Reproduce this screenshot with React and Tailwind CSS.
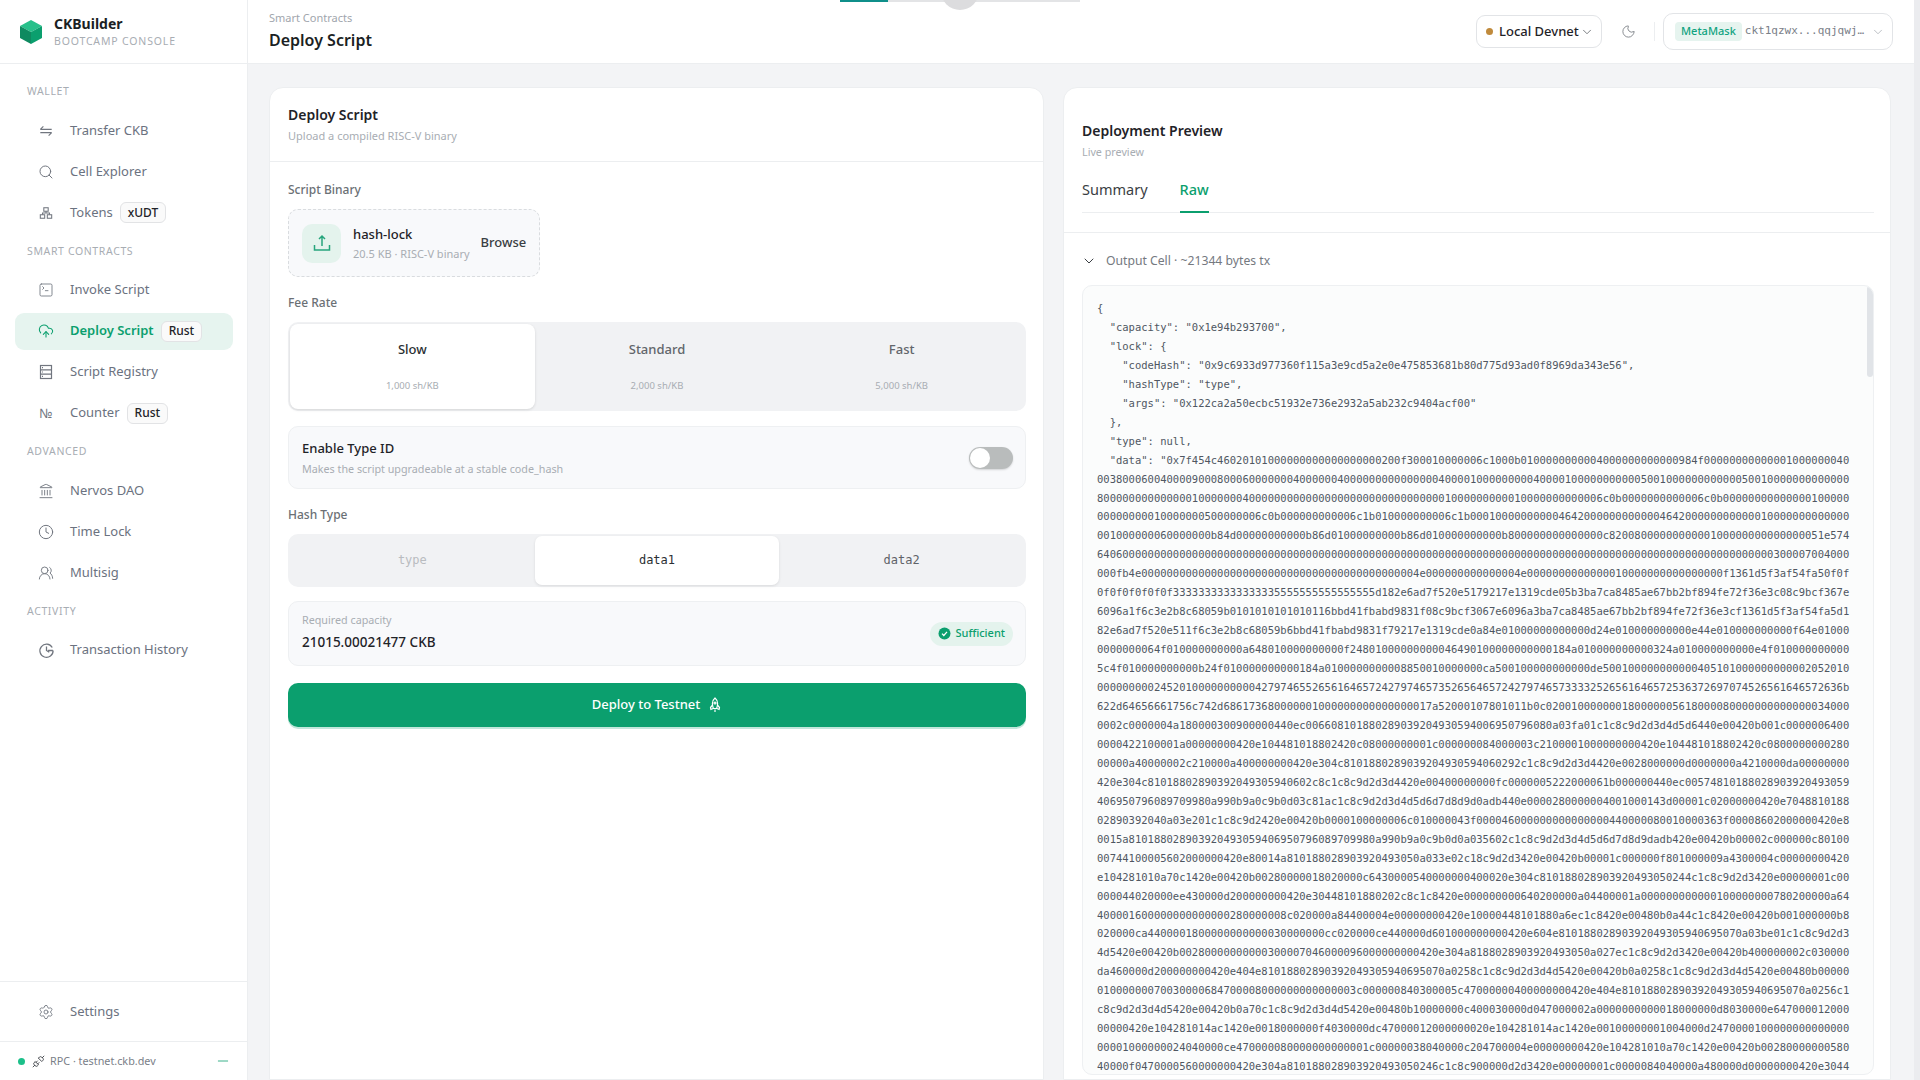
import {
  ChevronDown,
  Clock,
  CloudUpload,
  Landmark,
  Minus,
  Moon,
  Search,
  Settings,
  SquareTerminal,
  Unplug,
  UsersRound
} from "lucide-react"

const TransferIcon = () => (
  <svg width="14" height="14" viewBox="0 0 16 16" fill="none" stroke="currentColor" strokeWidth="1.3">
    <path d="M1.5 6.2h13M5 2.8 1.5 6.2M14.5 9.8h-13M11 13.2l3.5-3.4" />
  </svg>
)

const TokensIcon = () => (
  <svg width="14" height="14" viewBox="0 0 16 16" fill="none" stroke="currentColor" strokeWidth="1.2">
    <rect x="5.5" y="2" width="5" height="4" />
    <rect x="1.5" y="10" width="5" height="4" />
    <rect x="9.5" y="10" width="5" height="4" />
    <path d="M8 6v2M4 10V8h8v2" />
  </svg>
)

const RegistryIcon = () => (
  <svg width="16" height="16" viewBox="0 0 16 16" fill="none" stroke="currentColor" strokeWidth="1.2">
    <rect x="2.5" y="1.5" width="11" height="13" />
    <path d="M2.5 5.8h11M2.5 10.2h11M4 3.700h1M4 8h1M4 12.300h1" />
  </svg>
)

const HistoryIcon = () => (
  <svg width="17" height="17" viewBox="0 0 16 16" fill="none" stroke="currentColor" strokeWidth="1.2">
    <path d="M13.4 5.2A6.2 6.2 0 1 0 14.2 8M8 4.3V8l2.6 1.6M9.5 8h4.5" />
  </svg>
)

const Rocket = () => (
  <svg width="14" height="16" viewBox="0 0 14 16" fill="none" stroke="currentColor" strokeWidth="1.2">
    <path d="M7 1c2 1.6 2.6 3.6 2.6 5.6 0 2-.5 3.6-1 4.9H5.4c-.5-1.3-1-2.9-1-4.9C4.4 4.6 5 2.600 7 1Z" />
    <path d="M4.600 8 2.500 10.500l.4 2 2.300-1M9.400 8l2.100 2.500-.4 2-2.300-1M7 12.500V15" />
    <circle cx="7" cy="6" r="1" />
  </svg>
)

const sections = [
  {
    title: "Wallet",
    items: [
      { label: "Transfer CKB", icon: <TransferIcon /> },
      { label: "Cell Explorer", icon: <Search size={16} strokeWidth={1.5} /> },
      { label: "Tokens", icon: <TokensIcon />, badge: "xUDT" }
    ]
  },
  {
    title: "Smart Contracts",
    items: [
      { label: "Invoke Script", icon: <SquareTerminal size={16} strokeWidth={1.3} /> },
      { label: "Deploy Script", icon: <CloudUpload size={16} strokeWidth={1.6} />, badge: "Rust", active: true },
      { label: "Script Registry", icon: <RegistryIcon /> },
      { label: "Counter", icon: <span className="text-[13px] leading-none">№</span>, badge: "Rust" }
    ]
  },
  {
    title: "Advanced",
    items: [
      { label: "Nervos DAO", icon: <Landmark size={16} strokeWidth={1.4} /> },
      { label: "Time Lock", icon: <Clock size={16} strokeWidth={1.5} /> },
      { label: "Multisig", icon: <UsersRound size={16} strokeWidth={1.4} /> }
    ]
  },
  {
    title: "Activity",
    items: [{ label: "Transaction History", icon: <HistoryIcon /> }]
  }
]

// Every dump line is 119 chars wide, keep both ends of the transcription
const fit = (line) => {
  if (line.length > 119) return line.slice(0, 60) + line.slice(-59)
  return line.slice(0, 60) + "0".repeat(119 - line.length) + line.slice(60)
}

const hexLines = [
  "0038000600400009000800060000000400000040000000000000004000010000000000040000100000000000500100000000000050010000000000000",
  "80000000000000010000000400000000000000000000000000000001000000000010000000000006c0b0000000000006c0b00000000000000100000",
  "00000000010000000500000006c0b000000000006c1b010000000006c1b0100000000004642000000000000464200000000000010000000000000",
  "001000000060000000b84d00000000000b86d01000000000b86d01000000000b800000000000000c8200800000000000100000000000000051e574",
  "6406000000000000000000000000000000000000000000000000000000000000000000000000000000000000000000000000000000300007004000",
  "000fb4e00000000000000000000000000000000000000000004e000000000000004e0000000000000010000000000000000f1361d5f3af54fa50f0f",
  "0f0f0f0f0f0f33333333333333335555555555555555d182e6ad7f520e5179217e1319cde05b3ba7ca8485ae67bb2bf894fe72f36e3c08c9bcf367e",
  "6096a1f6c3e2b8c68059b0101010101010116bbd41fbabd9831f08c9bcf367e6096a3ba7ca8485ae67bb2bf894fe72f36e3cf1361d5f3af54fa5d1",
  "82e6ad7f520e511f6c3e2b8c68059b6bbd41fbabd9831f79217e1319cde05ba84e01000000000000d24e010000000000e44e010000000000f64e01000",
  "0000000064f010000000000a648010000000000f24801000000000046490100000000000184a010000000000324a010000000000e4f010000000000",
  "5c4f010000000000b24f010000000000184a010000000000885001000000000ca500100000000000de500100000000000405101000000000002052010",
  "000000000245201000000000042797465526561646572427974657352656164657242797465733332526561646572536372697074526561646572636b",
  "622d64656661756c742d686173680000001000000000000000017a5200017801011b0c020010000000180000005618000080000000000000034000",
  "0002c0000004a180000300900000440ec00660810188028903920493059406950796080a03fa01c1c8c9d2d3d4d5d6440e00420b001c0000006400",
  "0000422100001a00000000420e104481018802420c08000000001c00000084000003c2100001000000000420e104481018802420c0800000000280",
  "00000a40000002c210000a400000000420e304c8101880289039204930594060292c1c8c9d2d3d4420e0028000000d0000000a4210000da00000000",
  "420e304c81018802890392049305940602c8c1c8c9d2d3d4420e0040000000fc0000005222000061b000000440ec00574810188028903920493059",
  "406950796089709980a990b9a0c9b0d03c81ac1c8c9d2d3d4d5d6d7d8d9dadb440e0000280000004001000143d00001c02000000420e7048810188",
  "02890392040a03e201c1c8c9d2420e00420b0000100000006c010000043f000046000000000000000440000080010000363f00008602000000420e8",
  "0015a810188028903920493059406950796089709980a990b9a0c9b0d0a035602c1c8c9d2d3d4d5d6d7d8d9dadb420e00420b00002c000000c80100",
  "00744100005602000000420e80014a810188028903920493050a033e02c1c8c9d2d3420e00420b00001c000000f801000009a4300004c00000000420",
  "e104281010a70c1420e00420b00280000018020000c6430000540000000420e304c810188028903920493050244c1c8c9d2d3420e00000001c00",
  "000044020000ee430000d200000000420e30448101880202c8c1c8420e0010000000640200000a04400001a000000000000100000000780200000a64",
  "400001600000000000000280000008c020000a84400004e00000000420e10448101880a6ec1c8420e00480b0a44c1c8420e00420b001000000b8",
  "020000ca4400001800000000000030000000cc020000ce440000d601000000420e604e81018802890392049305940695070a03be01c1c8c9d2d3",
  "4d5420e00420b00280000000000300007046000096000000000420e304a810188028903920493050a027ec1c8c9d2d3420e00420b400000002c030000",
  "da460000d200000000420e404e81018802890392049305940695070a0258c1c8c9d2d3d4d5420e00420b0a0258c1c8c9d2d3d4d5420e00480b00000",
  "01000000070030000684700008000000000000003c000000840300005c470000400000000420e404e81018802890392049305940695070a0256c1",
  "c8c9d2d3d4d5420e00420b0a70c1c8c9d2d3d4d5420e00480b10000000c4030000d047000002a0000000000018000000d8030000e647000012000",
  "00000420e104281014ac1420e0018000000f4030000dc470000120000000420e104281014ac1420e00100000001004000d2470000100000000000000",
  "00001000000024040000ce470000080000000000001c00000038040000c24700004e00000000420e104281010a70c1420e00420b00280000000580",
  "40000f0470000560000000420e304a810188028903920493050246c1c8c9d2d3420e00000001c0000084040000a480000d00000000420e3044"
].map(fit)

const dataHead = '  "data": "0x7f454c46020101000000000000000000200f300010000006c1'
const dataTail = "b0100000000004000000000000984f00000000000001000000040".padStart(119 - dataHead.length, "0")

const rawJson = [
  "{",
  '  "capacity": "0x1e94b293700",',
  '  "lock": {',
  '    "codeHash": "0x9c6933d977360f115a3e9cd5a2e0e475853681b80d775d93ad0f8969da343e56",',
  '    "hashType": "type",',
  '    "args": "0x122ca2a50ecbc51932e736e2932a5ab232c9404acf00"',
  "  },",
  '  "type": null,',
  dataHead + dataTail,
  ...hexLines
].join("\n")

const NavRow = ({ item }) => (
  <div
    className={`flex h-[37px] items-center rounded-[9px] pl-[22px] text-[13px] ${
      item.active ? "bg-[#e6f4ef] font-semibold text-[#0b9f6e]" : "text-[#6b7280]"
    }`}
  >
    <span className={`flex w-[18px] justify-center ${item.active ? "text-[#0b9f6e]" : "text-[#71767f]"}`}>{item.icon}</span>
    <span className="ml-[15px]">{item.label}</span>
    {item.badge && (
      <span className="ml-[7px] flex h-[21px] items-center rounded-[6px] border border-[#e2e3e5] bg-[#fafafa] px-[7px] text-[12px] font-medium text-[#1f2328]">
        {item.badge}
      </span>
    )}
  </div>
)

const Sidebar = () => (
  <aside className="flex h-screen w-[248px] shrink-0 flex-col border-r border-[#eceef0] bg-white">
    <div className="flex h-[64px] shrink-0 items-center border-b border-[#eceef0] pl-[20px]">
      <svg width="22" height="24" viewBox="0 0 22 24">
        <polygon points="11,0 22,6 11,12 0,6" fill="#27c08a" />
        <polygon points="0,6 11,12 11,24 0,18" fill="#0f8a60" />
        <polygon points="22,6 11,12 11,24 22,18" fill="#0b9f6e" />
      </svg>
      <div className="ml-[12px]">
        <div className="text-[14px] leading-[18px] font-bold text-[#1b1f24]">CKBuilder</div>
        <div className="text-[10.5px] leading-[16px] tracking-[0.08em] text-[#a8adb3]">BOOTCAMP CONSOLE</div>
      </div>
    </div>
    <nav className="flex flex-1 flex-col px-[15px] pt-[18px]">
      {sections.map((s) => (
        <div key={s.title} className="mb-[10.5px]">
          <div className="mb-[12px] pl-[12px] text-[10.5px] leading-[18px] tracking-[0.06em] text-[#a8adb3] uppercase">{s.title}</div>
          <div className="flex w-[218px] flex-col gap-[4px]">
            {s.items.map((item) => (
              <NavRow key={item.label} item={item} />
            ))}
          </div>
        </div>
      ))}
    </nav>
    <div className="flex h-[60px] shrink-0 items-center border-t border-[#eceef0] px-[15px]">
      <div className="w-full">
        <NavRow item={{ label: "Settings", icon: <Settings size={16} strokeWidth={1.3} /> }} />
      </div>
    </div>
    <div className="flex h-[39px] shrink-0 items-center border-t border-[#eceef0] pr-[16px] pl-[18px] text-[10.8px] text-[#7a8088]">
      <span className="h-[7px] w-[7px] rounded-full bg-[#1cc08a]" />
      <Unplug size={13} strokeWidth={1.6} className="ml-[7px] text-[#34383d]" />
      <span className="ml-[5px]">RPC · testnet.ckb.dev</span>
      <Minus size={16} strokeWidth={1.2} className="ml-auto text-[#0b9f6e]" />
    </div>
  </aside>
)

const Header = () => (
  <header className="relative flex h-[64px] shrink-0 items-center border-b border-[#eceef0] bg-white pr-[21px] pl-[21px]">
    <div className="pb-[2px]">
      <div className="text-[11px] leading-[16px] text-[#a1a6ad]">Smart Contracts</div>
      <div className="mt-[3px] text-[16px] leading-[22px] font-semibold text-[#1b1f24]">Deploy Script</div>
    </div>
    <div className="ml-auto flex items-center">
      <div className="flex h-[33px] w-[126px] items-center rounded-[9px] border border-[#e2e4e7] pl-[9px] text-[13px] font-medium text-[#1f2328]">
        <span className="h-[7px] w-[7px] rounded-full bg-[#c08a3c]" />
        <span className="ml-[6px]">Local Devnet</span>
        <ChevronDown size={14} strokeWidth={1.4} className="ml-[1px] text-[#5f6368]" />
      </div>
      <Moon size={15} strokeWidth={1.4} className="ml-[19px] text-[#7a7f85]" />
      <div className="ml-[18px] h-[19px] w-px bg-[#eceef0]" />
      <div className="ml-[8px] flex h-[37px] w-[230px] items-center rounded-[10px] border border-[#e2e4e7] pl-[11px]">
        <span className="flex h-[19px] items-center rounded-[4px] bg-[#e6f4ef] px-[6px] text-[11px] font-medium text-[#10a37f]">MetaMask</span>
        <span className="ml-[3px] font-['DejaVu_Sans_Mono',monospace] text-[11px] text-[#7a8088]">ckt1qzwx...qqjqwj…</span>
        <ChevronDown size={14} strokeWidth={1.2} className="ml-[7px] text-[#a1a6ad]" />
      </div>
    </div>
    {/* leftover overlay poking in from the top edge */}
    <div className="absolute top-0 left-[592px] flex h-[2px] w-[240px]">
      <div className="h-full w-[48px] bg-[#0f8f8a]" />
      <div className="h-full flex-1 bg-[#e3e4e6]" />
    </div>
    <div className="absolute top-[-28px] left-[693px] h-[38px] w-[38px] rounded-full bg-[#dcdcde]" />
  </header>
)

const Label = ({ children, className = "" }) => (
  <div className={`text-[12px] leading-[18px] font-medium text-[#6b7075] ${className}`}>{children}</div>
)

const FeeOption = ({ name, rate, active }) => (
  <div className={`flex flex-col items-center rounded-[8px] pt-[15px] ${active ? "bg-white shadow-[0_1px_3px_rgba(0,0,0,0.12)]" : ""}`}>
    <div className={`text-[13px] leading-[20px] font-medium ${active ? "text-[#2b2f33]" : "text-[#62666b]"}`}>{name}</div>
    <div className="mt-[20px] text-[9.5px] leading-[14px] text-[#a8adb3]">{rate}</div>
  </div>
)

const HashOption = ({ name, active, disabled }) => (
  <div
    className={`flex items-center justify-center rounded-[7px] pb-[2px] font-['DejaVu_Sans_Mono',monospace] text-[12px] ${
      active ? "bg-white text-[#2b2f33] shadow-[0_1px_3px_rgba(0,0,0,0.1)]" : disabled ? "text-[#b9bcc0]" : "text-[#5f6368]"
    }`}
  >
    {name}
  </div>
)

const DeployCard = () => (
  <section className="flex min-h-0 flex-col rounded-t-[14px] border border-[#eceef0] bg-white">
    <div className="h-[74px] shrink-0 border-b border-[#eceef0] px-[18px] pt-[17px]">
      <div className="text-[14px] leading-[20px] font-semibold text-[#1f2328]">Deploy Script</div>
      <div className="mt-[3px] text-[11px] leading-[16px] text-[#a8adb3]">Upload a compiled RISC-V binary</div>
    </div>
    <div className="flex flex-col pt-[19px] pr-[17px] pl-[18px]">
      <Label>Script Binary</Label>
      <div className="mt-[10px] flex h-[68px] w-[252px] items-center rounded-[10px] border border-dashed border-[#d9dcdf] bg-[#f8f9fb] pl-[13px]">
        <div className="flex h-[39px] w-[39px] items-center justify-center rounded-[10px] bg-[#e4f3ed] text-[#27a57d]">
          <svg width="18" height="18" viewBox="0 0 18 18" fill="none" stroke="currentColor" strokeWidth="1.5">
            <path d="M9 12V2M6 5l3-3 3 3M1.500 11v5h15v-5" />
          </svg>
        </div>
        <div className="ml-[12px]">
          <div className="text-[13px] leading-[18px] font-medium text-[#1f2328]">hash-lock</div>
          <div className="mt-[3px] text-[11px] leading-[16px] text-[#a8adb3]">20.5 KB · RISC-V binary</div>
        </div>
        <div className="ml-[11px] text-[13px] font-medium text-[#3a3e43]">Browse</div>
      </div>
      <Label className="mt-[17px]">Fee Rate</Label>
      <div className="mt-[10px] grid h-[89px] grid-cols-3 rounded-[10px] bg-[#f1f2f4] p-[2px]">
        <FeeOption name="Slow" rate="1,000 sh/KB" active />
        <FeeOption name="Standard" rate="2,000 sh/KB" />
        <FeeOption name="Fast" rate="5,000 sh/KB" />
      </div>
      <div className="mt-[15px] flex h-[63px] items-center rounded-[10px] border border-[#eef0f2] bg-[#f8f9fb] pr-[12px] pl-[13px]">
        <div className="pt-[1px]">
          <div className="text-[13px] leading-[18px] font-medium text-[#1f2328]">Enable Type ID</div>
          <div className="mt-[4px] text-[10.75px] leading-[16px] text-[#a8adb3]">Makes the script upgradeable at a stable code_hash</div>
        </div>
        <div className="ml-auto flex h-[22px] w-[44px] items-center rounded-full bg-[#b9bcbc] pl-[1px] shadow-[0_1px_2px_rgba(0,0,0,0.15)]">
          <div className="h-[20px] w-[20px] rounded-full bg-white" />
        </div>
      </div>
      <Label className="mt-[17px]">Hash Type</Label>
      <div className="mt-[10px] grid h-[53px] grid-cols-3 rounded-[10px] bg-[#f1f2f4] p-[2px]">
        <HashOption name="type" disabled />
        <HashOption name="data1" active />
        <HashOption name="data2" />
      </div>
      <div className="mt-[14px] flex h-[65px] items-center rounded-[10px] border border-[#eef0f2] bg-[#f8f9fb] pr-[12px] pl-[13px]">
        <div className="pb-[3px]">
          <div className="text-[10.75px] leading-[16px] text-[#a8adb3]">Required capacity</div>
          <div className="mt-[4px] text-[13.5px] leading-[20px] font-medium text-[#1f2328]">21015.00021477 CKB</div>
        </div>
        <div className="ml-auto flex h-[24px] items-center rounded-full bg-[#e4f3ed] pr-[8px] pl-[8px] text-[11px] font-medium text-[#0b9f6e]">
          <svg width="13" height="13" viewBox="0 0 13 13" className="mr-[4px]">
            <circle cx="6.5" cy="6.5" r="6" fill="#0b9f6e" />
            <path d="M4 6.7 5.800 8.500 9 4.800" fill="none" stroke="#fff" strokeWidth="1.2" />
          </svg>
          Sufficient
        </div>
      </div>
      <div className="mt-[17px] flex h-[44px] items-center justify-center rounded-[10px] bg-[#0b9f6e] text-[13px] font-medium text-white shadow-[0_2px_0_rgba(11,159,110,0.25)]">
        Deploy to Testnet
        <span className="ml-[8px]">
          <Rocket />
        </span>
      </div>
    </div>
  </section>
)

const PreviewCard = () => (
  <section className="flex min-h-0 flex-col overflow-hidden rounded-t-[14px] border border-[#eceef0] bg-white">
    <div className="h-[145px] shrink-0 border-b border-[#eceef0] pt-[33px] pr-[16px] pl-[18px]">
      <div className="text-[14px] leading-[20px] font-semibold text-[#1f2328]">Deployment Preview</div>
      <div className="mt-[3px] text-[10.75px] leading-[16px] text-[#a8adb3]">Live preview</div>
      <div className="mt-[19px] flex h-[34px] gap-[32px] border-b border-[#eceef0] text-[14.5px]">
        <div className="text-[#3a3e43]">Summary</div>
        <div className="relative font-medium text-[#0b9f6e]">
          Raw
          <span className="absolute right-0 bottom-[-1px] left-0 h-[2px] bg-[#0b9f6e]" />
        </div>
      </div>
    </div>
    <div className="pr-[16px] pl-[18px]">
      <div className="flex h-[52px] items-center pt-[4px] text-[12.2px] text-[#75797f]">
        <ChevronDown size={16} strokeWidth={1.5} className="mr-[9px] -ml-[1px] text-[#3a3e43]" />
        Output Cell · ~21344 bytes tx
      </div>
      <div className="relative h-[790px] overflow-hidden rounded-[10px] border border-[#eef0f2] bg-[#fbfcfc] pt-[13px] pl-[14px]">
        <pre className="font-['DejaVu_Sans_Mono',monospace] text-[10.5px] leading-[18.95px] text-[#4f5762]">{rawJson}</pre>
        <div className="absolute top-0 right-0 h-[91px] w-[6px] rounded-[3px] bg-[#e1e4e8]" />
      </div>
    </div>
  </section>
)

export default function App() {
  return (
    <div className="flex h-screen overflow-hidden bg-white font-['Noto_Sans',sans-serif]">
      <Sidebar />
      <main className="flex min-w-0 flex-1 flex-col bg-[#f3f4f6]">
        <Header />
        <div className="grid min-h-0 flex-1 grid-cols-[775px_828px] gap-[19px] pt-[23px] pl-[21px]">
          <DeployCard />
          <PreviewCard />
        </div>
      </main>
      <div className="w-[6px] shrink-0 bg-[#ebecef]" />
    </div>
  )
}
